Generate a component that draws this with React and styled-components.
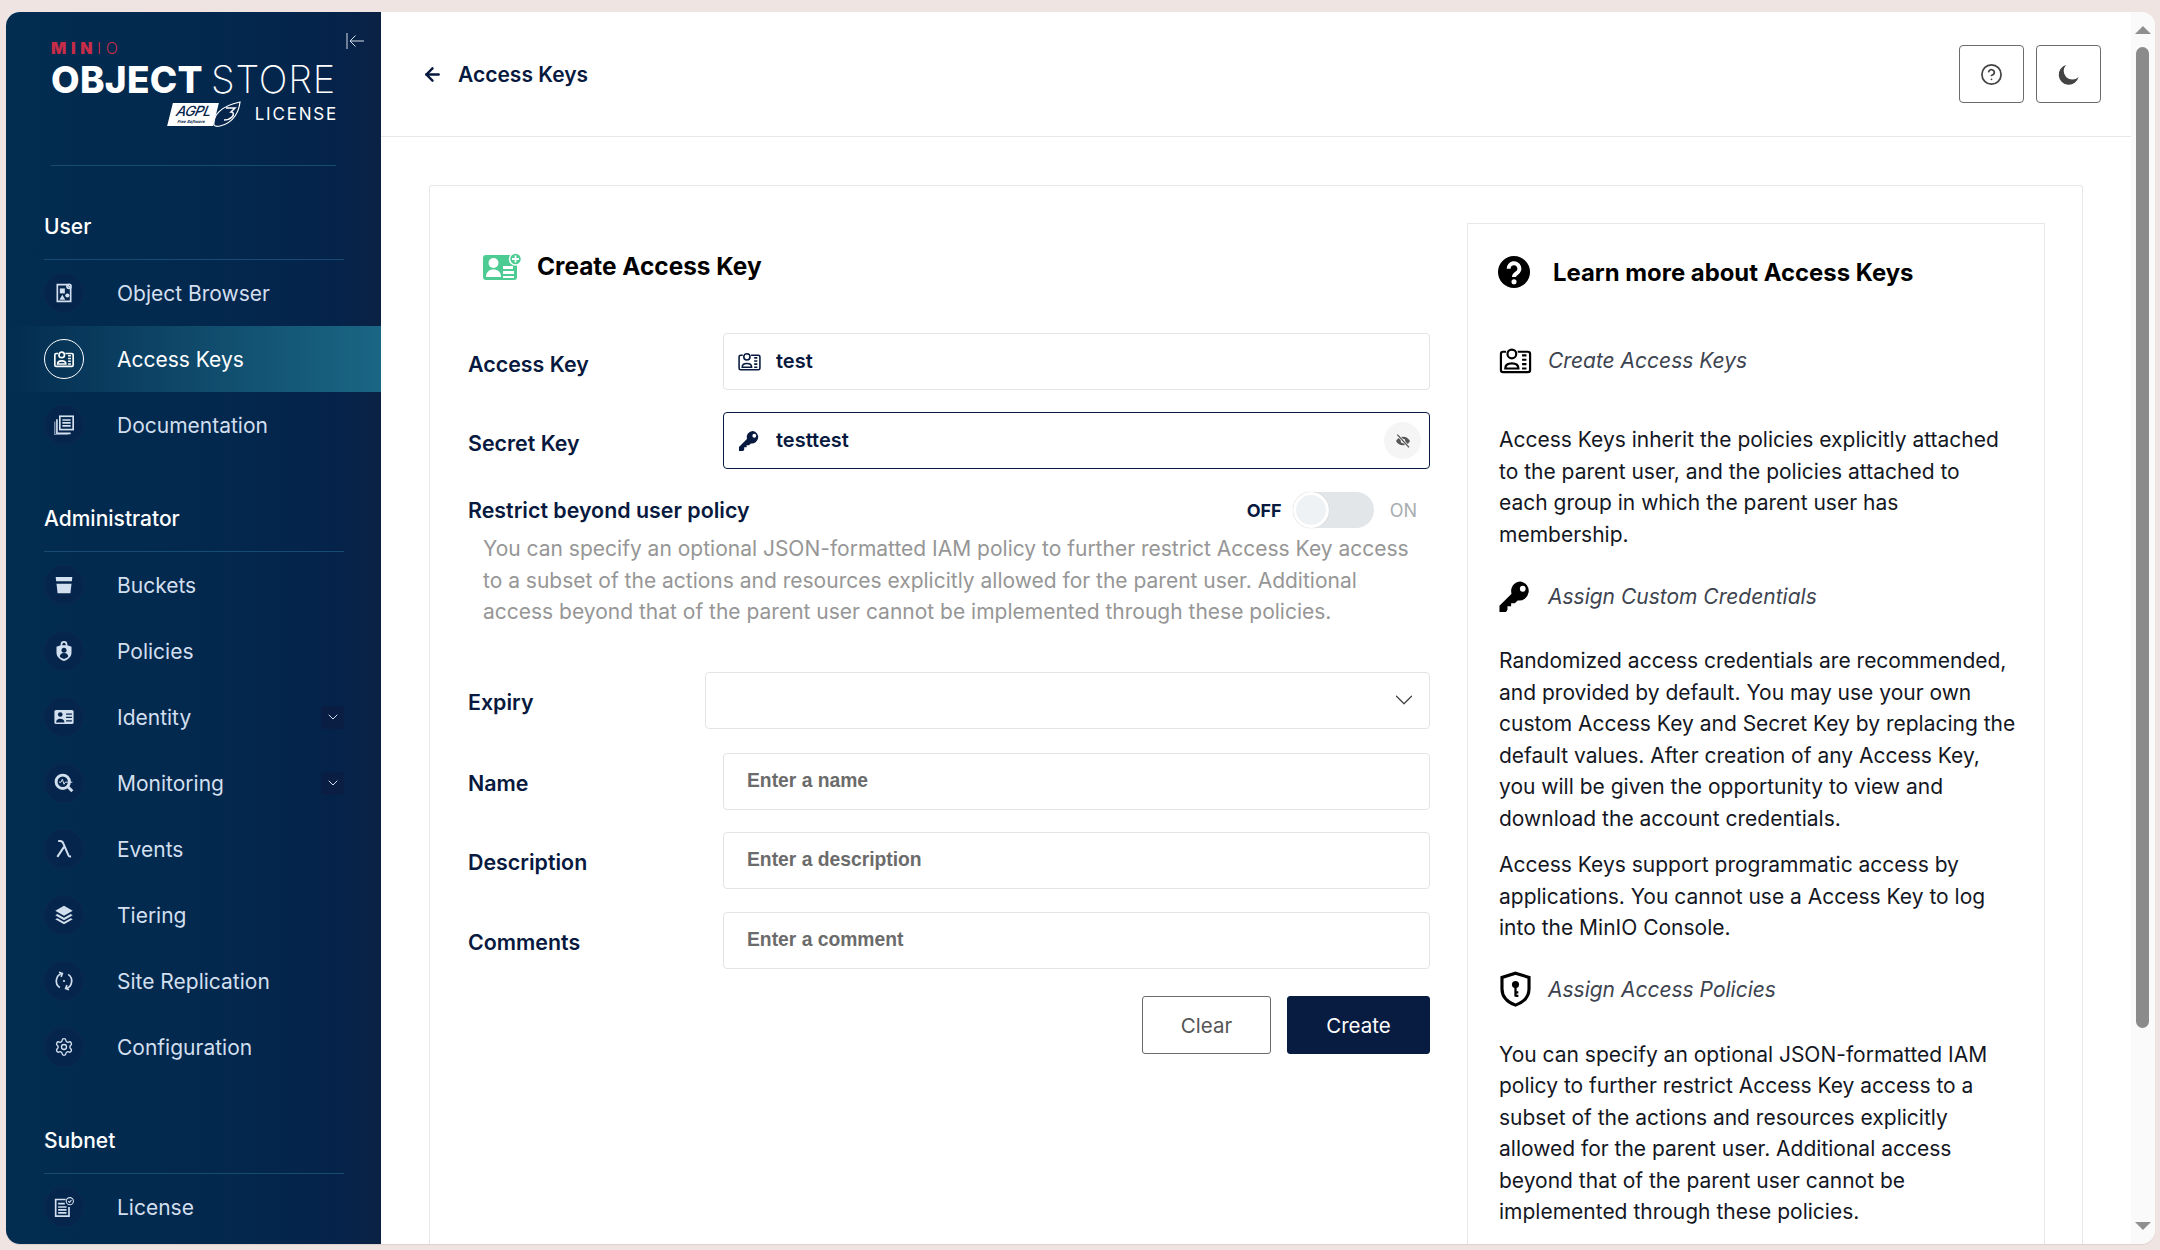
import React from 'react';
import styled, { createGlobalStyle } from 'styled-components';
import { ArrowLeft, ChevronDown, CircleHelp, Settings } from 'lucide-react';

const GlobalStyle = createGlobalStyle`
  html, body {
    margin: 0;
    height: 100%;
    overflow: hidden;
    background: #f0e4e2;
    font-family: Inter, "Noto Sans", sans-serif;
  }
  * { box-sizing: border-box; }
`;

// icons

const IdCardLine = ({ size = 24, sw = 1.8 }) => (
  <svg width={size} height={size} viewBox="0 0 24 24" fill="none" stroke="currentColor" strokeWidth={sw}>
    <path d="M5.5 6H3.5A1.5 1.5 0 0 0 2 7.5v11A1.5 1.5 0 0 0 3.5 20h17a1.5 1.5 0 0 0 1.5-1.5v-11A1.5 1.5 0 0 0 20.5 6H13.500" />
    <circle cx="9.500" cy="7.500" r="3" />
    <path d="M5 17.500c0-2.500 2-3.500 4.500-3.500s4.500 1 4.500 3.500z" />
    <path d="M16.500 8.500h3M16.500 11.500h3M16.500 14.500h3M16.500 17.500h3" />
  </svg>
);

const GreenCard = () => (
  <svg width="40" height="28" viewBox="0 0 40 28">
    <rect x="0" y="3" width="34" height="25" rx="3" fill="#4ccb92" />
    <circle cx="10.500" cy="11" r="5" fill="#fff" />
    <path d="M3 25c0-5 3-7.500 7.500-7.500S18 20 18 25z" fill="#fff" />
    <rect x="20" y="14" width="10" height="3" fill="#fff" />
    <rect x="20" y="19" width="11" height="3" fill="#fff" />
    <rect x="20" y="24" width="11" height="2" fill="#fff" />
    <circle cx="32.500" cy="7" r="6" fill="#4ccb92" stroke="#fff" strokeWidth="1.500" />
    <path d="M32.500 3.500v7M29 7h7" stroke="#fff" strokeWidth="1.800" />
  </svg>
);

const KeyIcon = ({ size = 24 }) => (
  <svg width={size} height={size} viewBox="0 0 24 24" fill="currentColor">
    <path fillRule="evenodd" d="M15.500 2a6.500 6.500 0 0 0-6.200 8.400L1 18.700V23h4.500l1-1.500V19H9v-2h2.500l2-2a6.500 6.500 0 1 0 2-13zm1.500 3a2 2 0 1 1 0 4 2 2 0 0 1 0-4z" />
  </svg>
);

const ShieldKey = () => (
  <svg width="36" height="37" viewBox="0 0 24 26" fill="none" stroke="currentColor">
    <path d="M12 1.500 21.500 4.500v8c0 5.500-4 9.500-9.500 11.500-5.500-2-9.500-6-9.500-11.500v-8z" strokeWidth="2.200" />
    <circle cx="12" cy="9.500" r="2.500" fill="currentColor" stroke="none" />
    <path d="M12 11v7M12 15h2M12 17.500h2" strokeWidth="1.600" />
  </svg>
);

const QuestionFilled = () => (
  <svg width="32" height="32" viewBox="0 0 24 24">
    <circle cx="12" cy="12" r="12" fill="#000" />
    <path d="M8 9.500a4 4 0 1 1 6 3.400c-1.300.8-2 1.400-2 2.800" fill="none" stroke="#fff" strokeWidth="3" />
    <circle cx="12" cy="19.300" r="1.900" fill="#fff" />
  </svg>
);

const Moon = () => (
  <svg width="23" height="23" viewBox="0 0 24 24" fill="currentColor">
    <path d="M9.500 2A10.500 10.500 0 1 0 22.500 14.500 9 9 0 0 1 9.500 2z" />
  </svg>
);

const EyeSlash = () => (
  <svg width="16" height="16" viewBox="0 0 24 24" fill="none" stroke="currentColor">
    <path d="M1.500 12C4 7.500 7.500 5.500 12 5.500s8 2 10.500 6.500c-2.500 4.500-6 6.500-10.500 6.500S4 16.500 1.500 12z" fill="currentColor" stroke="none" />
    <circle cx="12" cy="12" r="3.500" fill="#f5f5f5" stroke="none" />
    <path d="M3.500 2.500 21 21.500" stroke="#f5f5f5" strokeWidth="4" />
    <path d="M3.500 2.500 21 21.500" strokeWidth="2" />
  </svg>
);

const Collapse = () => (
  <svg width="19" height="18" viewBox="0 0 19 18" fill="none" stroke="#d5deea" strokeWidth="1">
    <path d="M1 1v16M18 9H4M9.500 3.500 4 9l5.500 5.500" />
  </svg>
);

const navIcon = (children, extra = {}) => (
  <svg width="20" height="20" viewBox="0 0 24 24" fill="currentColor" {...extra}>{children}</svg>
);

const line = { fill: 'none', stroke: 'currentColor', strokeWidth: 2 };

const ObjectBrowserIcon = () => navIcon(<>
  <path d="M4 2h12l4 4v16H4z" {...line} />
  <circle cx="18" cy="4" r="2.500" {...line} />
  <rect x="7" y="6.500" width="6" height="6" />
  <path d="M10 14l3.500 6h-7z" />
  <circle cx="16" cy="15" r="2.500" />
</>);

const DocsIcon = () => navIcon(<>
  <rect x="7" y="1.500" width="16" height="16" {...line} />
  <path d="M10 6h10M10 9.500h10M10 13h10" {...line} />
  <path d="M3.500 5v17H20" {...line} />
  <path d="M1 8v16h16" {...line} strokeWidth="1" />
</>);

const BucketIcon = () => navIcon(<>
  <path d="M2 2.500h20l-.6 5H2.600z" />
  <path d="M3 10.500h18l-1.300 11.500H4.300z" />
</>);

const PolicyIcon = () => navIcon(<>
  <path fillRule="evenodd" d="M8 5V4a4 4 0 0 1 8 0v1l5 2v7c0 5-4 8-9 10-5-2-9-5-9-10V7zm2 0h4V4a2 2 0 0 0-4 0z" />
  <circle cx="12" cy="11" r="3" fill="#06254c" />
  <path d="M7 19c0-3 2-4.500 5-4.500s5 1.500 5 4.500c-1.500 1.300-3 2-5 2.600-2-.6-3.500-1.300-5-2.600z" fill="#06254c" />
</>);

const IdentityIcon = () => navIcon(<>
  <rect x="0.500" y="3.500" width="23" height="17" rx="2" />
  <circle cx="7.500" cy="9" r="2.800" fill="#06254c" />
  <path d="M2.500 18.500c0-3 2-4.500 5-4.500s5 1.500 5 4.500z" fill="#06254c" />
  <path d="M14.500 8.500h7M14.500 12.500h7M14.500 16.500h7" stroke="#06254c" strokeWidth="1.500" fill="none" />
</>);

const MonitoringIcon = () => navIcon(<>
  <circle cx="10.500" cy="10.500" r="8" {...line} strokeWidth="3.500" />
  <path d="M16 16l6 6" {...line} strokeWidth="3.500" />
  <path d="M6 11h2.500l1.500-3.500 2 6 1.500-2.500H22" {...line} strokeWidth="1.200" />
</>);

const LayersIcon = () => navIcon(<>
  <path d="M12 1 22.500 7 12 13 1.500 7z" />
  <path d="M4 10.800 12 15.300l8-4.500 2.500 1.400L12 18.200 1.500 12.200z" />
  <path d="M4 15.800 12 20.300l8-4.500 2.500 1.400L12 23.200 1.500 17.200z" />
</>);

const ReplicationIcon = () => navIcon(<>
  <path d="M9.500 3A9.500 9.500 0 0 0 7 20" {...line} />
  <path d="M6 1.500l4 1.500-1.500 4" {...line} />
  <path d="M14.500 21A9.500 9.500 0 0 0 17 4" {...line} />
  <path d="M18 22.500l-4-1.500 1.500-4" {...line} />
  <circle cx="12" cy="12" r="1.300" />
</>);

const LicenseIcon = () => navIcon(<>
  <path d="M14 3H2v20h16V12" {...line} />
  <path d="M5 8h8M5 12h10M5 15.500h10M5 19h10" {...line} />
  <circle cx="19" cy="5" r="4.300" {...line} strokeWidth="1.300" />
  <path d="M17 5l1.500 1.500L21 3.800" {...line} strokeWidth="1.300" />
</>);

const LambdaIcon = () => navIcon(
  <path d="M5 2.500h2.500c2 0 3 1 3.800 3L17.500 20c.3.700.8 1 1.500 1h1.500M12 9.500 4 21.500" {...line} strokeWidth="2.400" />
);

const GearIcon = () => <Settings size={20} strokeWidth={1.6} />;

const sections = [
  {
    title: 'User',
    items: [
      { label: 'Object Browser', icon: <ObjectBrowserIcon /> },
      { label: 'Access Keys', icon: <IdCardLine size={22} sw={1.8} />, active: true },
      { label: 'Documentation', icon: <DocsIcon /> },
    ],
  },
  {
    title: 'Administrator',
    items: [
      { label: 'Buckets', icon: <BucketIcon /> },
      { label: 'Policies', icon: <PolicyIcon /> },
      { label: 'Identity', icon: <IdentityIcon />, more: true },
      { label: 'Monitoring', icon: <MonitoringIcon />, more: true },
      { label: 'Events', icon: <LambdaIcon /> },
      { label: 'Tiering', icon: <LayersIcon /> },
      { label: 'Site Replication', icon: <ReplicationIcon /> },
      { label: 'Configuration', icon: <GearIcon /> },
    ],
  },
  {
    title: 'Subnet',
    items: [{ label: 'License', icon: <LicenseIcon /> }],
  },
];

const App = () => {
  return (
    <>
      <GlobalStyle />
      <Window>
        <Sidebar>
          <Brand>
            <CollapseButton><Collapse /></CollapseButton>
            <MinioMark>MIN<MinioThin>IO</MinioThin></MinioMark>
            <ProductName>OBJECT<ProductThin>STORE</ProductThin></ProductName>
            <LicenseRow>
              <AgplBadge>
                <AgplText>AGPL</AgplText>
                <AgplSmall>Free Software</AgplSmall>
              </AgplBadge>
              <svg width="30" height="26" viewBox="0 0 30 26" fill="none">
                <path d="M2 24C1 15 8 5 28 1 27 10 22 22 8 25c-3 .600-5 .400-6-1z" fill="#06254c" stroke="#fff" strokeWidth="1.200" />
                <path d="M14 7h9l-4 4c3 0 3 3 1 5-2 2-5 3-8 3" stroke="#fff" strokeWidth="1.500" />
              </svg>
              <LicenseText>LICENSE</LicenseText>
            </LicenseRow>
          </Brand>
          {sections.map((section) => (
            <NavSection key={section.title}>
              <SectionTitle>{section.title}</SectionTitle>
              {section.items.map((item) => (
                <NavRow key={item.label} $active={item.active}>
                  <NavCircle $active={item.active}>{item.icon}</NavCircle>
                  <NavLabel $active={item.active}>{item.label}</NavLabel>
                  {item.more && <MoreBox><ChevronDown size={16} strokeWidth={1.5} /></MoreBox>}
                </NavRow>
              ))}
            </NavSection>
          ))}
        </Sidebar>

        <Main>
          <Header>
            <BackLink>
              <ArrowLeft size={21} strokeWidth={2.8} />
              <span>Access Keys</span>
            </BackLink>
            <HeaderActions>
              <SquareButton><CircleHelp size={23} strokeWidth={1.8} /></SquareButton>
              <SquareButton><Moon /></SquareButton>
            </HeaderActions>
          </Header>

          <Card>
            <FormColumn>
              <FormTitle>
                <GreenCard />
                <span>Create Access Key</span>
              </FormTitle>

              <FieldRow>
                <FieldLabel>Access Key</FieldLabel>
                <InputBox>
                  <InputIcon><IdCardLine size={25} sw={1.5} /></InputIcon>
                  <TextInput $hasIcon value="test" readOnly />
                </InputBox>
              </FieldRow>

              <FieldRow>
                <FieldLabel>Secret Key</FieldLabel>
                <InputBox $focused>
                  <InputIcon><KeyIcon size={23} /></InputIcon>
                  <TextInput $hasIcon value="testtest" readOnly />
                  <EyeButton><EyeSlash /></EyeButton>
                </InputBox>
              </FieldRow>

              <ToggleRow>
                <ToggleLabel>Restrict beyond user policy</ToggleLabel>
                <ToggleGroup>
                  <ToggleState $on>OFF</ToggleState>
                  <ToggleTrack><ToggleThumb /></ToggleTrack>
                  <ToggleState>ON</ToggleState>
                </ToggleGroup>
              </ToggleRow>
              <HintText>
                You can specify an optional JSON-formatted IAM policy to further restrict Access Key access
                to a subset of the actions and resources explicitly allowed for the parent user. Additional
                access beyond that of the parent user cannot be implemented through these policies.
              </HintText>

              <FieldRow $top={44} $labelWidth={237}>
                <FieldLabel>Expiry</FieldLabel>
                <SelectBox><ChevronDown size={30} strokeWidth={1} /></SelectBox>
              </FieldRow>
              <FieldRow $top={24}>
                <FieldLabel>Name</FieldLabel>
                <InputBox><TextInput placeholder="Enter a name" readOnly /></InputBox>
              </FieldRow>
              <FieldRow $top={22}>
                <FieldLabel>Description</FieldLabel>
                <InputBox><TextInput placeholder="Enter a description" readOnly /></InputBox>
              </FieldRow>
              <FieldRow $top={23}>
                <FieldLabel>Comments</FieldLabel>
                <InputBox><TextInput placeholder="Enter a comment" readOnly /></InputBox>
              </FieldRow>

              <ButtonRow>
                <ClearButton>Clear</ClearButton>
                <CreateButton>Create</CreateButton>
              </ButtonRow>
            </FormColumn>

            <HelpPanel>
              <HelpHeading>
                <QuestionFilled />
                <span>Learn more about Access Keys</span>
              </HelpHeading>

              <HelpSub $first>
                <HelpSubIcon><IdCardLine size={41} sw={1.5} /></HelpSubIcon>
                <span>Create Access Keys</span>
              </HelpSub>
              <HelpText>
                Access Keys inherit the policies explicitly attached to the parent user, and the policies
                attached to<br />each group in which the parent user has membership.
              </HelpText>

              <HelpSub>
                <HelpSubIcon><KeyIcon size={36} /></HelpSubIcon>
                <span>Assign Custom Credentials</span>
              </HelpSub>
              <HelpText>
                Randomized access credentials are recommended, and provided by default. You may use your own
                custom Access Key and Secret Key by replacing the default values. After creation of any Access
                Key, you will be given the opportunity to view and download the account credentials.
              </HelpText>
              <HelpText>
                Access Keys support programmatic access by applications. You cannot use a Access Key to log
                into the MinIO Console.
              </HelpText>

              <HelpSub>
                <HelpSubIcon><ShieldKey /></HelpSubIcon>
                <span>Assign Access Policies</span>
              </HelpSub>
              <HelpText>
                You can specify an optional JSON-formatted IAM policy to further restrict Access Key access
                to a subset of the actions and resources explicitly allowed for the parent user. Additional
                access beyond that of the parent user cannot be implemented through these policies.
              </HelpText>
            </HelpPanel>
          </Card>
        </Main>

        <ScrollTrack>
          <ScrollUp />
          <ScrollThumb />
          <ScrollDown />
        </ScrollTrack>
      </Window>
    </>
  );
};

const Window = styled.div`
  display: flex;
  height: 1232px;
  margin: 12px 5px 0 6px;
  background: #fff;
  border-radius: 14px;
  overflow: hidden;
  box-shadow: 0 1px 1px #dccfcd;
`;

const Sidebar = styled.aside`
  flex: 0 0 375px;
  padding: 0 37px 0 38px;
  background: linear-gradient(90deg, #022c50 0%, #03284e 55%, #05234a 88%, #0b2144 100%);
  overflow: hidden;
`;

const Brand = styled.div`
  position: relative;
  height: 154px;
  width: 285px;
  margin-left: 7px;
  padding-top: 29px;
  border-bottom: 1px solid #164b74;
  color: #fff;
`;

const CollapseButton = styled.div`
  position: absolute;
  top: 20px;
  right: -29px;
  line-height: 0;
`;

const MinioMark = styled.div`
  height: 14px;
  font-size: 16px;
  line-height: 14px;
  font-weight: 900;
  letter-spacing: 4.6px;
  color: #c72c48;
`;

const MinioThin = styled.span`
  font-weight: 300;
`;

const ProductName = styled.div`
  display: flex;
  justify-content: space-between;
  margin-top: 6px;
  font-size: 37px;
  line-height: 37px;
  font-weight: 800;
  letter-spacing: 0.3px;
`;

const ProductThin = styled.span`
  font-weight: 200;
  font-size: 38px;
  letter-spacing: 0.8px;
`;

const LicenseRow = styled.div`
  display: flex;
  align-items: center;
  justify-content: flex-end;
  height: 26px;
  margin-top: 3px;
`;

const AgplBadge = styled.div`
  display: flex;
  flex-direction: column;
  align-items: center;
  width: 46px;
  height: 23px;
  margin-right: -4px;
  background: #fff;
  transform: skewX(-14deg);
  color: #06254c;
`;

const AgplText = styled.span`
  font-size: 14px;
  line-height: 16px;
  font-weight: 500;
  font-style: italic;
  letter-spacing: -0.6px;
`;

const AgplSmall = styled.span`
  font-size: 4px;
  line-height: 5px;
  font-weight: 700;
  font-style: italic;
`;

const LicenseText = styled.span`
  margin-left: 13px;
  font-size: 17px;
  font-weight: 400;
  letter-spacing: 1.8px;
  margin-right: -2px;
`;

const NavSection = styled.section`
  margin-top: 40px;
`;

const SectionTitle = styled.h3`
  margin: 0;
  height: 54px;
  padding-bottom: 12px;
  border-bottom: 1px solid #164b74;
  font-size: 21px;
  line-height: 42px;
  font-weight: 500;
  color: #fff;
`;

const NavRow = styled.div`
  display: flex;
  align-items: center;
  height: 66px;
  margin: 0 -37px 0 -38px;
  padding: 0 37px 0 38px;
  background: ${(p) => (p.$active ? 'linear-gradient(90deg, #022c50 0%, #0c4163 35%, #1a6684 100%)' : 'transparent')};
`;

const NavCircle = styled.div`
  display: flex;
  align-items: center;
  justify-content: center;
  flex: 0 0 40px;
  height: 40px;
  border-radius: 50%;
  background: ${(p) => (p.$active ? 'transparent' : '#06254c')};
  border: 1px solid ${(p) => (p.$active ? '#fff' : '#0b2a52')};
  color: ${(p) => (p.$active ? '#fff' : '#d2dfee')};
`;

const NavLabel = styled.span`
  flex: 1;
  margin-left: 33px;
  padding-top: 1px;
  font-size: 21px;
  color: ${(p) => (p.$active ? '#fff' : '#d2dfee')};
`;

const MoreBox = styled.div`
  display: flex;
  align-items: center;
  justify-content: center;
  width: 23px;
  height: 23px;
  border-radius: 3px;
  background: #091e42;
  color: #d2dfee;
`;

const Main = styled.main`
  display: flex;
  flex-direction: column;
  flex: 1;
  min-width: 0;
  overflow: hidden;
`;

const Header = styled.header`
  display: flex;
  align-items: center;
  justify-content: space-between;
  flex: 0 0 125px;
  padding: 0 30px 0 41px;
  border-bottom: 1px solid #e8e8e8;
`;

const BackLink = styled.div`
  display: flex;
  align-items: center;
  gap: 15px;
  font-size: 21px;
  font-weight: 600;
  color: #07193e;
`;

const HeaderActions = styled.div`
  display: flex;
  gap: 12px;
`;

const SquareButton = styled.div`
  display: flex;
  align-items: center;
  justify-content: center;
  width: 65px;
  height: 58px;
  border: 1px solid #6b6b6b;
  border-radius: 4px;
  color: #444;
`;

const Card = styled.div`
  display: flex;
  flex: 1;
  gap: 37px;
  margin: 48px 48px 0 48px;
  padding: 37px 37px 0 38px;
  border: 1px solid #e8e8e8;
  border-bottom: 0;
  border-radius: 3px 3px 0 0;
`;

const FormColumn = styled.div`
  flex: 0 0 962px;
`;

const FormTitle = styled.h2`
  display: flex;
  align-items: center;
  gap: 14px;
  height: 40px;
  margin: 23px 0 47px 15px;
  font-size: 24.4px;
  font-weight: 700;
  color: #000;
`;

const FieldRow = styled.div`
  display: flex;
  align-items: center;
  margin-top: ${(p) => p.$top ?? 22}px;

  & > label {
    flex: 0 0 ${(p) => p.$labelWidth ?? 255}px;
  }
`;

const FieldLabel = styled.label`
  padding-top: 4px;
  font-size: 21.4px;
  font-weight: 600;
  color: #07193e;
`;

const ToggleLabel = styled.span`
  font-size: 21.4px;
  font-weight: 600;
  color: #07193e;
`;

const InputBox = styled.div`
  display: flex;
  align-items: center;
  flex: 1;
  height: 57px;
  padding: 0 8px 0 13px;
  border: 1px solid ${(p) => (p.$focused ? '#07193e' : '#e4e4e4')};
  border-radius: 4px;
`;

const InputIcon = styled.div`
  display: flex;
  justify-content: center;
  flex: 0 0 25px;
  color: #07193e;
`;

const TextInput = styled.input`
  flex: 1;
  min-width: 0;
  height: 100%;
  margin-left: ${(p) => (p.$hasIcon ? '14px' : '10px')};
  padding: 0 0 2px;
  border: 0;
  outline: 0;
  background: transparent;
  font-family: inherit;
  font-size: 20px;
  font-weight: 600;
  color: #07193e;

  &::placeholder {
    font-family: "Liberation Sans", Arial, sans-serif;
    font-size: 19.3px;
    font-weight: 700;
    color: #6b6b6b;
    opacity: 1;
  }
`;

const EyeButton = styled.div`
  display: flex;
  align-items: center;
  justify-content: center;
  width: 37px;
  height: 37px;
  border-radius: 50%;
  background: #f5f5f5;
  color: #555;
`;

const ToggleRow = styled.div`
  display: flex;
  align-items: center;
  justify-content: space-between;
  height: 36px;
  margin-top: 23px;
  padding-right: 13px;
`;

const ToggleGroup = styled.div`
  display: flex;
  align-items: center;
  gap: 11px;
`;

const ToggleState = styled.span`
  margin-left: ${(p) => (p.$on ? 0 : 5)}px;
  font-size: 18px;
  font-weight: ${(p) => (p.$on ? 700 : 400)};
  color: ${(p) => (p.$on ? '#07193e' : '#a8adb0')};
`;

const ToggleTrack = styled.div`
  width: 81px;
  height: 36px;
  border-radius: 18px;
  background: #e2e6e8;
`;

const ToggleThumb = styled.div`
  width: 36px;
  height: 36px;
  border-radius: 50%;
  background: #eef2f4;
  border: 3px solid #fff;
  box-shadow: 0 0 1px #bbb;
`;

const HintText = styled.p`
  margin: 5px 0 0 15px;
  font-size: 21px;
  line-height: 31.5px;
  color: #969696;
`;

const SelectBox = styled.div`
  display: flex;
  align-items: center;
  justify-content: flex-end;
  flex: 1;
  height: 57px;
  padding-right: 10px;
  border: 1px solid #e4e4e4;
  border-radius: 4px;
  color: #444;
`;

const ButtonRow = styled.div`
  display: flex;
  justify-content: flex-end;
  gap: 16px;
  margin-top: 27px;
`;

const ClearButton = styled.button`
  width: 129px;
  height: 58px;
  padding: 2px 0 0;
  border: 1px solid #6b6b6b;
  border-radius: 3px;
  background: #fff;
  font-family: inherit;
  font-size: 20.5px;
  color: #555;
`;

const CreateButton = styled(ClearButton)`
  width: 143px;
  border-color: #081c42;
  background: #081c42;
  color: #fff;
`;

const HelpPanel = styled.div`
  flex: 1;
  min-width: 0;
  padding: 30px 27px 0 30px;
  border: 1px solid #e8e8e8;
  border-bottom: 0;
`;

const HelpHeading = styled.h3`
  display: flex;
  align-items: center;
  gap: 23px;
  height: 36px;
  margin: 0;
  font-size: 23.9px;
  font-weight: 700;
  color: #000;
`;

const HelpSub = styled.div`
  display: flex;
  align-items: center;
  gap: 15px;
  height: 40px;
  margin: ${(p) => (p.$first ? '50px 0 44px' : '26px 0 29px')};
  font-size: 21px;
  font-style: italic;
  color: #3d4450;
`;

const HelpSubIcon = styled.div`
  display: flex;
  justify-content: center;
  flex: 0 0 35px;
  min-width: 0;
  color: #000;
`;

const HelpText = styled.p`
  margin: 0 0 15px 1px;
  font-size: 21px;
  line-height: 31.5px;
  color: #14171f;
`;

const ScrollTrack = styled.div`
  position: relative;
  flex: 0 0 24px;
  padding: 35px 6px 0 5px;
  background: #fafafa;
`;

const ScrollThumb = styled.div`
  width: 13px;
  height: 981px;
  border-radius: 7px;
  background: #8b8b8b;
`;

const ScrollUp = styled.div`
  position: absolute;
  top: 14px;
  left: 4px;
  border-left: 8px solid transparent;
  border-right: 8px solid transparent;
  border-bottom: 8px solid #8f8f8f;
`;

const ScrollDown = styled.div`
  position: absolute;
  bottom: 14px;
  left: 4px;
  border-left: 8px solid transparent;
  border-right: 8px solid transparent;
  border-top: 8px solid #8f8f8f;
`;

export default App;
